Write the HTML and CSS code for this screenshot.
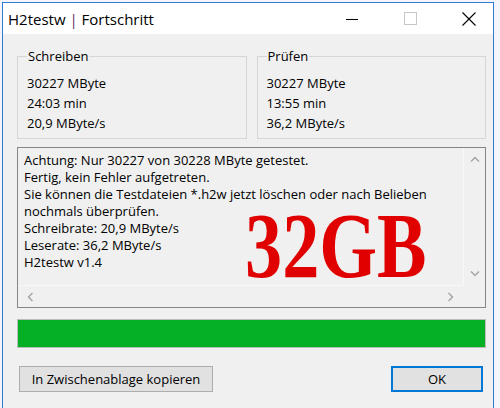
FILE: index.html
```html
<!DOCTYPE html>
<html lang="de">
<head>
    <meta charset="UTF-8">
    <title>H2testw | Fortschritt</title>
    <link rel="stylesheet" href="styles.css">
</head>
<body>
    <div class="window">
        <div class="titlebar">
            <span class="title">H2testw <span class="sep">|</span> Fortschritt</span>
            <div class="controls">
                <span class="ctl">
                    <svg width="12" height="12" viewBox="0 0 12 12"><line x1="0" y1="6.5" x2="12" y2="6.5" stroke="#000" stroke-width="1"/></svg>
                </span>
                <span class="ctl">
                    <svg width="13" height="13" viewBox="0 0 13 13"><rect x="0.5" y="0.5" width="12" height="12" fill="none" stroke="#c6c6c6" stroke-width="1"/></svg>
                </span>
                <span class="ctl ctl-close">
                    <svg width="14" height="14" viewBox="0 0 14 14"><path d="M0.5 0.5 L13.5 13.5 M13.5 0.5 L0.5 13.5" stroke="#000" stroke-width="1.1" fill="none"/></svg>
                </span>
            </div>
        </div>

        <div class="client">
            <div class="groups">
                <fieldset class="group">
                    <legend>Schreiben</legend>
                    <div>30227 MByte</div>
                    <div>24:03 min</div>
                    <div>20,9 MByte/s</div>
                </fieldset>
                <fieldset class="group">
                    <legend>Prüfen</legend>
                    <div>30227 MByte</div>
                    <div>13:55 min</div>
                    <div>36,2 MByte/s</div>
                </fieldset>
            </div>

            <div class="log">
                <div class="log-text">
                    <div>Achtung: Nur 30227 von 30228 MByte getestet.</div>
                    <div>Fertig, kein Fehler aufgetreten.</div>
                    <div>Sie können die Testdateien *.h2w jetzt löschen oder nach Belieben</div>
                    <div>nochmals überprüfen.</div>
                    <div>Schreibrate: 20,9 MByte/s</div>
                    <div>Leserate: 36,2 MByte/s</div>
                    <div>H2testw v1.4</div>
                    <span class="stamp">32GB</span>
                </div>
                <div class="vscroll">
                    <svg width="10" height="6" viewBox="0 0 10 6"><polyline points="1,5.5 5,1.5 9,5.5" fill="none" stroke="#a6a6a6" stroke-width="1.5"/></svg>
                    <svg width="10" height="6" viewBox="0 0 10 6"><polyline points="1,0.5 5,4.5 9,0.5" fill="none" stroke="#a6a6a6" stroke-width="1.5"/></svg>
                </div>
                <div class="hscroll">
                    <svg width="6" height="10" viewBox="0 0 6 10"><polyline points="5.5,1 1.5,5 5.5,9" fill="none" stroke="#a6a6a6" stroke-width="1.5"/></svg>
                    <svg width="6" height="10" viewBox="0 0 6 10"><polyline points="0.5,1 4.5,5 0.5,9" fill="none" stroke="#a6a6a6" stroke-width="1.5"/></svg>
                </div>
                <div class="corner"></div>
            </div>

            <div class="progress">
                <div class="progress-fill" style="width: 100%"></div>
            </div>

            <div class="buttons">
                <button class="btn btn-copy">In Zwischenablage kopieren</button>
                <button class="btn btn-ok">OK</button>
            </div>
        </div>
    </div>
</body>
</html>
```

FILE: styles.css
```css
:root {
    --face: #f0f0f0;
    --accent: #2f7bd5;
    --text: #000;
    --arrow: #a6a6a6;
}

* {
    margin: 0;
    padding: 0;
    box-sizing: border-box;
}

html, body {
    height: 100%;
}

body {
    background: #f3f5f8;
    font-family: 'Segoe UI', 'Open Sans', Arial, sans-serif;
    font-size: 13px;
    color: var(--text);
    overflow: hidden;
}

.window {
    margin: 2px 0 0 2px;
    width: 492px;
    height: 420px;
    border: 1px solid var(--accent);
    border-bottom: none;
    background: var(--face);
}

/* title bar */
.titlebar {
    height: 31px;
    background: #fff;
    display: flex;
    align-items: center;
    padding-left: 5px;
}

.title {
    font-size: 15px;
    color: #000;
}

.title .sep {
    color: #5b2a63;
}

.controls {
    margin-left: auto;
    display: flex;
    height: 100%;
}

.ctl {
    width: 58px;
    display: flex;
    align-items: center;
    justify-content: center;
}

.ctl-close {
    width: 54px;
    padding-left: 6px;
}

/* client area */
.client {
    padding: 14px 7px 0 14px;
}

.groups {
    display: grid;
    grid-template-columns: 1fr 1fr;
    gap: 10px;
}

.group {
    border: 1px solid #d6d6d6;
    padding: 9px 9px 5px 9px;
    min-width: 0;
    line-height: 20px;
}

.group legend {
    padding: 0 1px;
    line-height: 16px;
}

/* log box */
.log {
    margin-top: 8px;
    height: 161px;
    border: 1px solid #858585;
    display: grid;
    grid-template-columns: 1fr 22px;
    grid-template-rows: 1fr 22px;
    background: var(--face);
}

.log-text {
    position: relative;
    padding: 4px 0 0 6px;
    line-height: 17px;
    white-space: nowrap;
}

.stamp {
    position: absolute;
    left: 227px;
    top: 50px;
    font-family: 'Liberation Serif', 'Times New Roman', serif;
    font-weight: bold;
    font-size: 94px;
    line-height: 1;
    color: #e00000;
    transform: scaleX(0.79);
    transform-origin: left top;
}

.vscroll {
    border-left: 1px solid #f8f8f8;
    display: flex;
    flex-direction: column;
    justify-content: space-between;
    align-items: center;
    padding: 8px 0;
}

.hscroll {
    border-top: 1px solid #f8f8f8;
    display: flex;
    justify-content: space-between;
    align-items: center;
    padding: 0 9px 0 9px;
}

/* progress */
.progress {
    margin-top: 11px;
    height: 29px;
    border: 1px solid #bcbcbc;
    background: #e6e6e6;
}

.progress-fill {
    height: 100%;
    background: #06b025;
}

/* buttons */
.buttons {
    margin-top: 18px;
    display: flex;
    justify-content: space-between;
    padding: 0 3px 0 2px;
}

.btn {
    height: 26px;
    font-family: inherit;
    font-size: 13px;
    color: #000;
    background: #e1e1e1;
    border: 1px solid #adadad;
}

.btn-copy {
    width: 194px;
}

.btn-ok {
    width: 92px;
    border: 2px solid #0078d7;
}
```
